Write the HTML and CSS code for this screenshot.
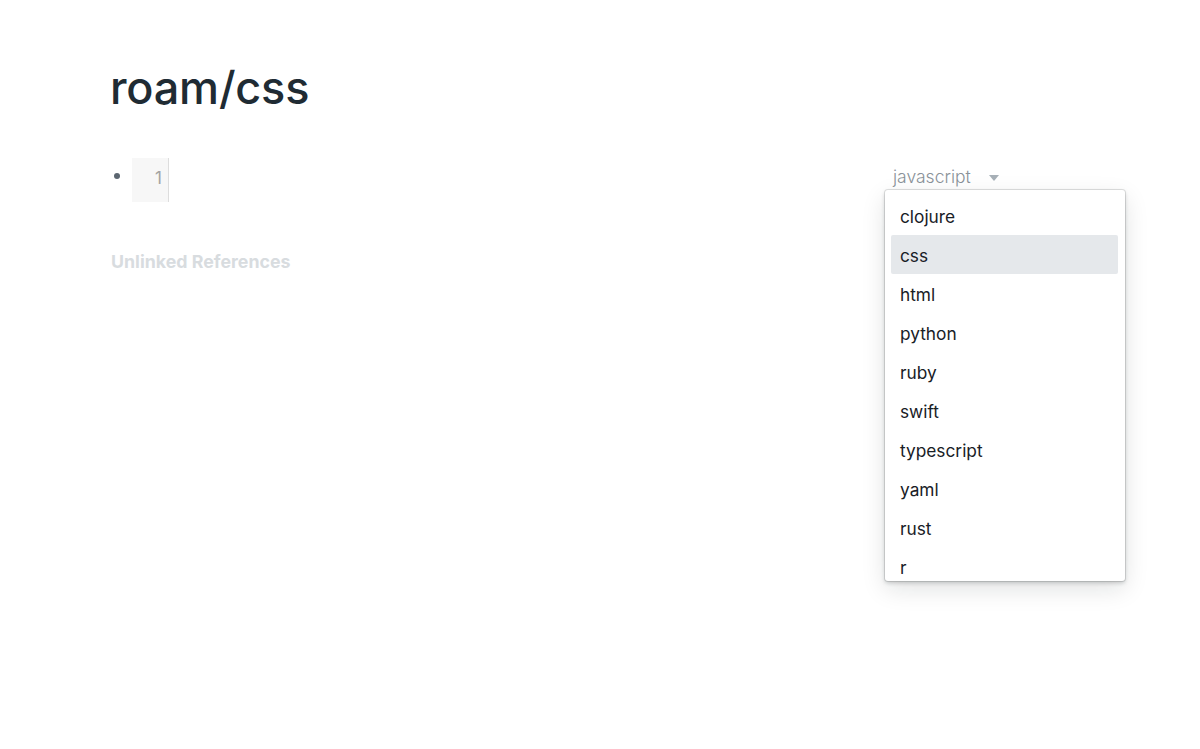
FILE: index.html
```html
<!DOCTYPE html>
<html>
<head>
<meta charset="utf-8">
<link rel="stylesheet" href="styles.css">
</head>
<body>
<div class="page">
  <h1 class="title">roam/css</h1>
  <div class="block">
    <span class="bullet"></span>
    <div class="code">
      <div class="gutter">1</div>
      <div class="code-body"></div>
      <div class="lang">
        <span class="lang-name">javascript</span>
        <svg class="caret" width="10" height="6" viewBox="0 0 10 6"><path d="M0 0h10L5 6z" fill="#a7b0b7"/></svg>
        <div class="menu">
          <div class="item">clojure</div>
          <div class="item active">css</div>
          <div class="item">html</div>
          <div class="item">python</div>
          <div class="item">ruby</div>
          <div class="item">swift</div>
          <div class="item">typescript</div>
          <div class="item">yaml</div>
          <div class="item">rust</div>
          <div class="item">r</div>
        </div>
      </div>
    </div>
  </div>
  <div class="refs">Unlinked References</div>
</div>
</body>
</html>
```
FILE: styles.css
```css
html, body {
  margin: 0;
  padding: 0;
  background: #fff;
  font-family: Inter, "Noto Sans", sans-serif;
}
body { min-height: 749px; }
.page {
  padding: 55px 0 0 110px;
  width: 1015px;
  min-height: 694px;
}
.title {
  margin: 0;
  font-size: 45px;
  font-weight: 500;
  color: #202b33;
  line-height: 66px;
  letter-spacing: -0.2px;
}
.block {
  display: flex;
  align-items: flex-start;
  margin-top: 37px;
}
.bullet {
  width: 6px;
  height: 6px;
  border-radius: 50%;
  background: #5c6670;
  margin: 15px 0 0 4px;
  flex: none;
}
.code {
  position: relative;
  flex: 1;
  display: flex;
  margin-left: 12px;
}
.gutter {
  width: 37px;
  height: 44px;
  background: #f7f7f7;
  border-right: 1px solid #dddddd;
  box-sizing: border-box;
  text-align: right;
  padding: 9px 6px 0 0;
  font-size: 17px;
  line-height: 22px;
  color: #a3a3a3;
  font-weight: 400;
}
.code-body { flex: 1; }
.lang {
  position: absolute;
  top: 8px;
  left: 761px;
  display: flex;
  align-items: center;
  gap: 18px;
}
.lang-name {
  font-size: 17.5px;
  color: #8a9299;
  font-weight: 300;
  line-height: 22px;
}
.caret { margin-top: 1px; }
.menu {
  position: absolute;
  top: 24px;
  left: -8px;
  width: 240px;
  height: 391px;
  box-sizing: border-box;
  padding: 6px 7px 6px 6px;
  background: #fff;
  border-radius: 3px;
  overflow: hidden;
  box-shadow: 0 0 0 1px rgba(16,22,26,0.12), 0 2px 4px rgba(16,22,26,0.2), 0 8px 24px rgba(16,22,26,0.12);
}
.item {
  height: 39px;
  line-height: 42px;
  padding-left: 9px;
  font-size: 17.3px;
  color: #182026;
  border-radius: 2px;
}
.item.active { background: #e5e8eb; }
.refs {
  margin-top: 49px;
  margin-left: 1px;
  font-size: 17.8px;
  font-weight: 700;
  color: #d8dcdf;
}
```
